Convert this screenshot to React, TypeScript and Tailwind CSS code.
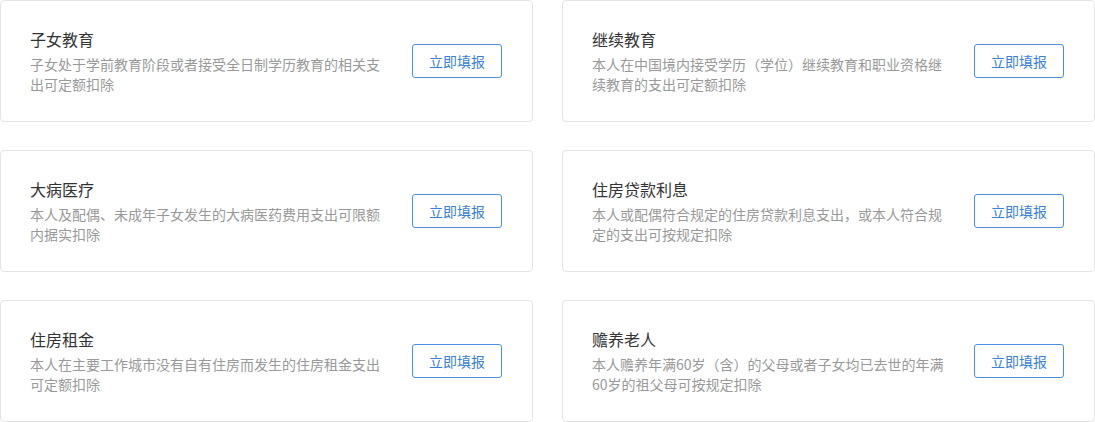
import React from 'react';

interface Item {
  title: string;
  desc: string;
}

const items: Item[] = [
  { title: '子女教育', desc: '子女处于学前教育阶段或者接受全日制学历教育的相关支出可定额扣除' },
  { title: '继续教育', desc: '本人在中国境内接受学历（学位）继续教育和职业资格继续教育的支出可定额扣除' },
  { title: '大病医疗', desc: '本人及配偶、未成年子女发生的大病医药费用支出可限额内据实扣除' },
  { title: '住房贷款利息', desc: '本人或配偶符合规定的住房贷款利息支出，或本人符合规定的支出可按规定扣除' },
  { title: '住房租金', desc: '本人在主要工作城市没有自有住房而发生的住房租金支出可定额扣除' },
  { title: '赡养老人', desc: '本人赡养年满60岁（含）的父母或者子女均已去世的年满60岁的祖父母可按规定扣除' },
];

const DeductCard: React.FC<{ item: Item }> = ({ item }) => (
  <div className="h-[122px] bg-white border border-[#e4e4e4] rounded-[4px] pl-[29px] pr-[30px] flex items-center justify-between">
    <div className="w-[352px]">
      <h3 className="text-[16px] leading-[22px] text-[#333] mb-[4px]">{item.title}</h3>
      <p className="text-[14px] leading-[20px] text-[#999]">{item.desc}</p>
    </div>
    <button className="w-[90px] h-[34px] border border-[#4a8fe0] rounded-[3px] text-[14px] text-[#3a80d6] bg-white">
      立即填报
    </button>
  </div>
);

export default function App() {
  return (
    <div
      className="w-[1095px] h-[422px] bg-white grid grid-cols-2 gap-x-[29px] gap-y-[28px]"
      style={{ fontFamily: '"Noto Sans CJK SC", "Noto Sans", sans-serif' }}
    >
      {items.map((item) => (
        <DeductCard key={item.title} item={item} />
      ))}
    </div>
  );
}
